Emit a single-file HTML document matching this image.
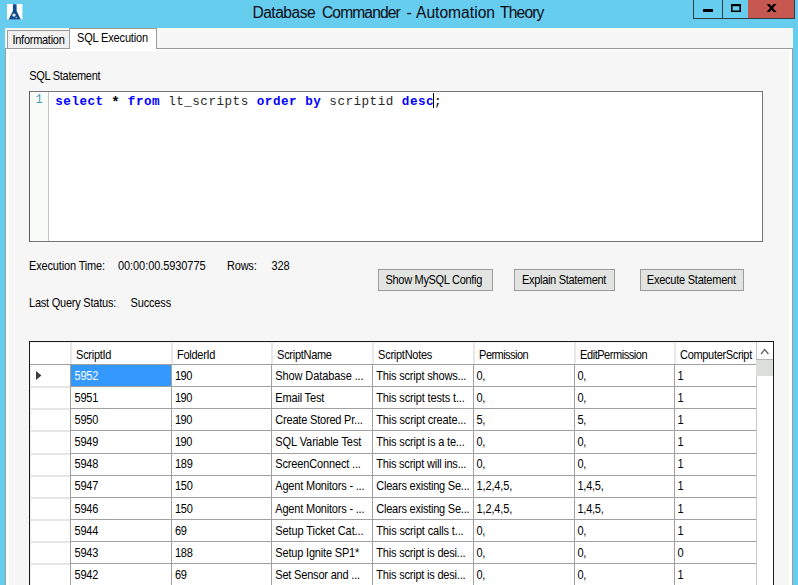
<!DOCTYPE html>
<html lang="en"><head><meta charset="utf-8"><title>Database Commander - Automation Theory</title>
<style>
html,body{margin:0;padding:0}
body{width:798px;height:585px;overflow:hidden;background:#66cdef;position:relative;font-family:"Liberation Sans",Arial,sans-serif;font-size:11px;color:#000}
div,span,svg{position:absolute;box-sizing:border-box}
.t{white-space:pre;line-height:1;height:1em}
.s{transform:scaleY(1.1);transform-origin:0 9.31px}
.btn{border:1px solid #9c9c9c;background:#e2e4e2}
.hl{background:#a0a0a0;height:1px}
.vl{background:#a0a0a0;width:1px}
.hv{background:#e8e8e8;width:2px}
.m{font:12.6px "Liberation Mono","Courier New",monospace;letter-spacing:0.5px;line-height:15px;height:15px}
.k{color:#0000ff;font-weight:bold;position:static}
.n{position:static;color:#2a2a2a}
</style></head><body>

<div style="left:693px;top:0;width:102px;height:19px;background:#2e3c46"></div>
<div style="left:694px;top:0;width:28px;height:18px;background:#66cdef"></div>
<div style="left:723px;top:0;width:25px;height:18px;background:#66cdef"></div>
<div style="left:748px;top:0;width:46px;height:18px;background:#c75850"></div>
<div style="left:703px;top:9px;width:10px;height:3px;background:#000"></div>
<svg style="left:731px;top:4px" width="10" height="8" viewBox="0 0 10 8"><path d="M0 0h10v8h-10z M1.6 2.2v4.3h6.8v-4.3z" fill="#000" fill-rule="evenodd"/></svg>
<svg style="left:766px;top:4px" width="11" height="8" viewBox="0 0 11 8"><path d="M0.5 0h3L10.5 8h-3z M7.5 0h3L3.5 8h-3z" fill="#000"/></svg>
<svg style="left:7px;top:4px" width="16" height="16" viewBox="0 0 16 16"><rect width="15.4" height="15.4" fill="#fff"/><path d="M5.9 0.2h3.7v6.9l4.2 8.3H1.6l4.3-8.3z" fill="#0f4b8c"/><circle cx="7" cy="11.1" r="1.7" fill="#e6ecf4"/><circle cx="9.3" cy="13.5" r=".8" fill="#a8c0dc"/></svg>
<div style="left:5px;top:28px;width:788px;height:557px;background:#f7f7f7"></div>
<div style="left:5px;top:48px;width:788px;height:540px;background:#fff;border:1px solid #9c9c9c"></div>
<div style="left:9px;top:51px;width:780px;height:540px;background:#f6f6f6"></div>
<div style="left:7px;top:30px;width:63px;height:19px;background:#f0f0f0;border:1px solid #9c9c9c"></div>
<div style="left:69px;top:28px;width:88px;height:21px;background:#fff;border:1px solid #9c9c9c;border-bottom:none"></div>
<div style="left:29px;top:91px;width:734px;height:151px;background:#fff;border:1px solid #767676;border-left-color:#5a5a5a"></div>
<div style="left:30px;top:92px;width:18px;height:149px;background:#f8fbf8"></div>
<div style="left:48px;top:92px;width:1px;height:149px;background:#c4c4c4"></div>
<span class="t m" style="left:35.4px;top:92.7px;font-size:12px;color:#4a9cc0">1</span>
<span class="t m" style="left:55.3px;top:94.7px"><span class="k">select</span>   <span class="k">from</span> <span class="n">lt_scripts</span> <span class="k">order</span> <span class="k">by</span> <span class="n">scriptid</span> <span class="k">desc</span>;</span>
<div style="left:433px;top:93px;width:1px;height:15px;background:#000"></div>
<span class="t" style="left:111.3px;top:96.4px;font:bold 14px 'Liberation Mono',monospace;line-height:14px;height:14px">*</span>
<div class="btn" style="left:378px;top:269px;width:115px;height:22px"></div>
<div class="btn" style="left:514px;top:269px;width:101px;height:22px"></div>
<div class="btn" style="left:640px;top:269px;width:104px;height:22px"></div>
<div style="left:29px;top:341px;width:745px;height:260px;background:#fff;border:1px solid #1a1a1a"></div>
<div style="left:71px;top:365px;width:100px;height:21px;background:#3399ff"></div>
<div style="left:30px;top:342px;width:726px;height:1px;background:#f1f1f1"></div>
<div class="hv" style="left:70px;top:342px;height:22px"></div>
<div class="hv" style="left:171px;top:342px;height:22px"></div>
<div class="hv" style="left:271px;top:342px;height:22px"></div>
<div class="hv" style="left:372px;top:342px;height:22px"></div>
<div class="hv" style="left:473px;top:342px;height:22px"></div>
<div class="hv" style="left:574px;top:342px;height:22px"></div>
<div class="hv" style="left:674px;top:342px;height:22px"></div>
<div class="hl" style="left:30px;top:364px;width:726px"></div>
<div class="hl" style="left:70px;top:386px;width:686px"></div>
<div style="left:31px;top:386px;width:39px;height:2px;background:#e6e6e6"></div>
<div class="hl" style="left:70px;top:408px;width:686px"></div>
<div style="left:31px;top:408px;width:39px;height:2px;background:#e6e6e6"></div>
<div class="hl" style="left:70px;top:430px;width:686px"></div>
<div style="left:31px;top:430px;width:39px;height:2px;background:#e6e6e6"></div>
<div class="hl" style="left:70px;top:453px;width:686px"></div>
<div style="left:31px;top:453px;width:39px;height:2px;background:#e6e6e6"></div>
<div class="hl" style="left:70px;top:475px;width:686px"></div>
<div style="left:31px;top:475px;width:39px;height:2px;background:#e6e6e6"></div>
<div class="hl" style="left:70px;top:497px;width:686px"></div>
<div style="left:31px;top:497px;width:39px;height:2px;background:#e6e6e6"></div>
<div class="hl" style="left:70px;top:519px;width:686px"></div>
<div style="left:31px;top:519px;width:39px;height:2px;background:#e6e6e6"></div>
<div class="hl" style="left:70px;top:541px;width:686px"></div>
<div style="left:31px;top:541px;width:39px;height:2px;background:#e6e6e6"></div>
<div class="hl" style="left:70px;top:563px;width:686px"></div>
<div style="left:31px;top:563px;width:39px;height:2px;background:#e6e6e6"></div>
<div class="vl" style="left:70px;top:365px;height:230px"></div>
<div class="vl" style="left:171px;top:365px;height:230px"></div>
<div class="vl" style="left:271px;top:365px;height:230px"></div>
<div class="vl" style="left:372px;top:365px;height:230px"></div>
<div class="vl" style="left:473px;top:365px;height:230px"></div>
<div class="vl" style="left:574px;top:365px;height:230px"></div>
<div class="vl" style="left:674px;top:365px;height:230px"></div>
<div style="left:30px;top:365px;width:1px;height:230px;background:#ededed"></div>
<svg style="left:36px;top:371px" width="7" height="9" viewBox="0 0 7 9"><path d="M0 0 L5.4 4.5 L0 9z" fill="#3c3c3c"/></svg>
<div style="left:756px;top:342px;width:17px;height:250px;background:#fff;border-left:1px solid #c8c8c8"></div>
<div style="left:756px;top:359px;width:17px;height:17px;background:#dcdedc;border-top:1px solid #b4b4b4"></div>
<svg style="left:760px;top:348px" width="10" height="7" viewBox="0 0 10 7"><path d="M1 6 L4.7 1.6 L8.4 6" stroke="#606060" stroke-width="1.3" fill="none"/></svg>
<span class="t" style="left:252.4px;top:4.79px;font-size:15.6px;color:#0a0a14;letter-spacing:-0.508px">Database</span>
<span class="t" style="left:322px;top:4.79px;font-size:15.6px;color:#0a0a14;letter-spacing:-0.889px">Commander</span>
<span class="t" style="left:406.5px;top:4.79px;font-size:15.6px;color:#0a0a14">-</span>
<span class="t" style="left:416px;top:4.79px;font-size:15.6px;color:#0a0a14;letter-spacing:0.011px">Automation</span>
<span class="t" style="left:500px;top:4.79px;font-size:15.6px;color:#0a0a14;letter-spacing:-0.824px">Theory</span>
<span class="t s" style="left:12.5px;top:34.69px;letter-spacing:-0.276px">Information</span>
<span class="t s" style="left:77px;top:32.69px;letter-spacing:-0.151px">SQL Execution</span>
<span class="t s" style="left:29.3px;top:70.99px;letter-spacing:-0.293px">SQL Statement</span>
<span class="t s" style="left:29px;top:260.69px;letter-spacing:-0.151px">Execution Time:</span>
<span class="t s" style="left:118px;top:260.69px;letter-spacing:-0.075px">00:00:00.5930775</span>
<span class="t s" style="left:227px;top:260.69px;letter-spacing:-0.212px">Rows:</span>
<span class="t s" style="left:271.5px;top:260.69px;letter-spacing:-0.12px">328</span>
<span class="t s" style="left:29px;top:298.19px;letter-spacing:-0.228px">Last Query Status:</span>
<span class="t s" style="left:130.5px;top:298.19px;letter-spacing:-0.154px">Success</span>
<span class="t s" style="left:385.5px;top:274.69px;letter-spacing:-0.306px">Show MySQL Config</span>
<span class="t s" style="left:522px;top:274.69px;letter-spacing:-0.311px">Explain Statement</span>
<span class="t s" style="left:646.8px;top:274.69px;letter-spacing:-0.233px">Execute Statement</span>
<span class="t s" style="left:76.1px;top:350.19px;letter-spacing:-0.287px">ScriptId</span>
<span class="t s" style="left:177.1px;top:350.19px;letter-spacing:-0.295px">FolderId</span>
<span class="t s" style="left:277.1px;top:350.19px;letter-spacing:-0.287px">ScriptName</span>
<span class="t s" style="left:378.1px;top:350.19px;letter-spacing:-0.26px">ScriptNotes</span>
<span class="t s" style="left:479.1px;top:350.19px;letter-spacing:-0.541px">Permission</span>
<span class="t s" style="left:580.1px;top:350.19px;letter-spacing:-0.454px">EditPermission</span>
<span class="t s" style="left:680.1px;top:350.19px;letter-spacing:-0.33px">ComputerScript</span>
<span class="t s" style="left:74.6px;top:370.69px;color:#fff;letter-spacing:-0.246px">5952</span>
<span class="t s" style="left:174.9px;top:370.69px;letter-spacing:-0.453px">190</span>
<span class="t s" style="left:275.3px;top:370.69px;letter-spacing:-0.099px">Show Database ...</span>
<span class="t s" style="left:376.3px;top:370.69px;letter-spacing:-0.182px">This script shows...</span>
<span class="t s" style="left:476.5px;top:370.69px;letter-spacing:-0.25px">0,</span>
<span class="t s" style="left:577.5px;top:370.69px;letter-spacing:-0.25px">0,</span>
<span class="t s" style="left:677.5px;top:370.69px;letter-spacing:-0.25px">1</span>
<span class="t s" style="left:74.6px;top:392.84px;letter-spacing:-0.25px">5951</span>
<span class="t s" style="left:174.9px;top:392.84px;letter-spacing:-0.453px">190</span>
<span class="t s" style="left:275.3px;top:392.84px;letter-spacing:-0.175px">Email Test</span>
<span class="t s" style="left:376.3px;top:392.84px;letter-spacing:-0.154px">This script tests t...</span>
<span class="t s" style="left:476.5px;top:392.84px;letter-spacing:-0.25px">0,</span>
<span class="t s" style="left:577.5px;top:392.84px;letter-spacing:-0.25px">0,</span>
<span class="t s" style="left:677.5px;top:392.84px;letter-spacing:-0.25px">1</span>
<span class="t s" style="left:74.6px;top:414.99px;letter-spacing:-0.25px">5950</span>
<span class="t s" style="left:174.9px;top:414.99px;letter-spacing:-0.453px">190</span>
<span class="t s" style="left:275.3px;top:414.99px;letter-spacing:-0.195px">Create Stored Pr...</span>
<span class="t s" style="left:376.3px;top:414.99px;letter-spacing:-0.144px">This script create...</span>
<span class="t s" style="left:476.5px;top:414.99px;letter-spacing:-0.25px">5,</span>
<span class="t s" style="left:577.5px;top:414.99px;letter-spacing:-0.25px">5,</span>
<span class="t s" style="left:677.5px;top:414.99px;letter-spacing:-0.25px">1</span>
<span class="t s" style="left:74.6px;top:437.14px;letter-spacing:-0.25px">5949</span>
<span class="t s" style="left:174.9px;top:437.14px;letter-spacing:-0.453px">190</span>
<span class="t s" style="left:275.3px;top:437.14px;letter-spacing:-0.073px">SQL Variable Test</span>
<span class="t s" style="left:376.3px;top:437.14px;letter-spacing:-0.155px">This script is a te...</span>
<span class="t s" style="left:476.5px;top:437.14px;letter-spacing:-0.25px">0,</span>
<span class="t s" style="left:577.5px;top:437.14px;letter-spacing:-0.25px">0,</span>
<span class="t s" style="left:677.5px;top:437.14px;letter-spacing:-0.25px">1</span>
<span class="t s" style="left:74.6px;top:459.29px;letter-spacing:-0.25px">5948</span>
<span class="t s" style="left:174.9px;top:459.29px;letter-spacing:-0.25px">189</span>
<span class="t s" style="left:275.3px;top:459.29px;letter-spacing:-0.151px">ScreenConnect ...</span>
<span class="t s" style="left:376.3px;top:459.29px;letter-spacing:-0.211px">This script will ins...</span>
<span class="t s" style="left:476.5px;top:459.29px;letter-spacing:-0.25px">0,</span>
<span class="t s" style="left:577.5px;top:459.29px;letter-spacing:-0.25px">0,</span>
<span class="t s" style="left:677.5px;top:459.29px;letter-spacing:-0.25px">1</span>
<span class="t s" style="left:74.6px;top:481.44px;letter-spacing:-0.25px">5947</span>
<span class="t s" style="left:174.9px;top:481.44px;letter-spacing:-0.25px">150</span>
<span class="t s" style="left:275.3px;top:481.44px;letter-spacing:-0.197px">Agent Monitors - ...</span>
<span class="t s" style="left:376.3px;top:481.44px;letter-spacing:-0.23px">Clears existing Se...</span>
<span class="t s" style="left:476.5px;top:481.44px;letter-spacing:-0.138px">1,2,4,5,</span>
<span class="t s" style="left:577.5px;top:481.44px;letter-spacing:-0.25px">1,4,5,</span>
<span class="t s" style="left:677.5px;top:481.44px;letter-spacing:-0.25px">1</span>
<span class="t s" style="left:74.6px;top:503.59px;letter-spacing:-0.25px">5946</span>
<span class="t s" style="left:174.9px;top:503.59px;letter-spacing:-0.25px">150</span>
<span class="t s" style="left:275.3px;top:503.59px;letter-spacing:-0.197px">Agent Monitors - ...</span>
<span class="t s" style="left:376.3px;top:503.59px;letter-spacing:-0.23px">Clears existing Se...</span>
<span class="t s" style="left:476.5px;top:503.59px;letter-spacing:-0.138px">1,2,4,5,</span>
<span class="t s" style="left:577.5px;top:503.59px;letter-spacing:-0.25px">1,4,5,</span>
<span class="t s" style="left:677.5px;top:503.59px;letter-spacing:-0.25px">1</span>
<span class="t s" style="left:74.6px;top:525.74px;letter-spacing:-0.25px">5944</span>
<span class="t s" style="left:174.9px;top:525.74px;letter-spacing:-0.25px">69</span>
<span class="t s" style="left:275.3px;top:525.74px;letter-spacing:-0.088px">Setup Ticket Cat...</span>
<span class="t s" style="left:376.3px;top:525.74px;letter-spacing:-0.149px">This script calls t...</span>
<span class="t s" style="left:476.5px;top:525.74px;letter-spacing:-0.25px">0,</span>
<span class="t s" style="left:577.5px;top:525.74px;letter-spacing:-0.25px">0,</span>
<span class="t s" style="left:677.5px;top:525.74px;letter-spacing:-0.25px">1</span>
<span class="t s" style="left:74.6px;top:547.89px;letter-spacing:-0.25px">5943</span>
<span class="t s" style="left:174.9px;top:547.89px;letter-spacing:-0.25px">188</span>
<span class="t s" style="left:275.3px;top:547.89px;letter-spacing:-0.179px">Setup Ignite SP1*</span>
<span class="t s" style="left:376.3px;top:547.89px;letter-spacing:-0.201px">This script is desi...</span>
<span class="t s" style="left:476.5px;top:547.89px;letter-spacing:-0.25px">0,</span>
<span class="t s" style="left:577.5px;top:547.89px;letter-spacing:-0.25px">0,</span>
<span class="t s" style="left:677.5px;top:547.89px;letter-spacing:-0.25px">0</span>
<span class="t s" style="left:74.6px;top:570.04px;letter-spacing:-0.25px">5942</span>
<span class="t s" style="left:174.9px;top:570.04px;letter-spacing:-0.25px">69</span>
<span class="t s" style="left:275.3px;top:570.04px;letter-spacing:-0.192px">Set Sensor and ...</span>
<span class="t s" style="left:376.3px;top:570.04px;letter-spacing:-0.201px">This script is desi...</span>
<span class="t s" style="left:476.5px;top:570.04px;letter-spacing:-0.25px">0,</span>
<span class="t s" style="left:577.5px;top:570.04px;letter-spacing:-0.25px">0,</span>
<span class="t s" style="left:677.5px;top:570.04px;letter-spacing:-0.25px">1</span>
</body></html>
